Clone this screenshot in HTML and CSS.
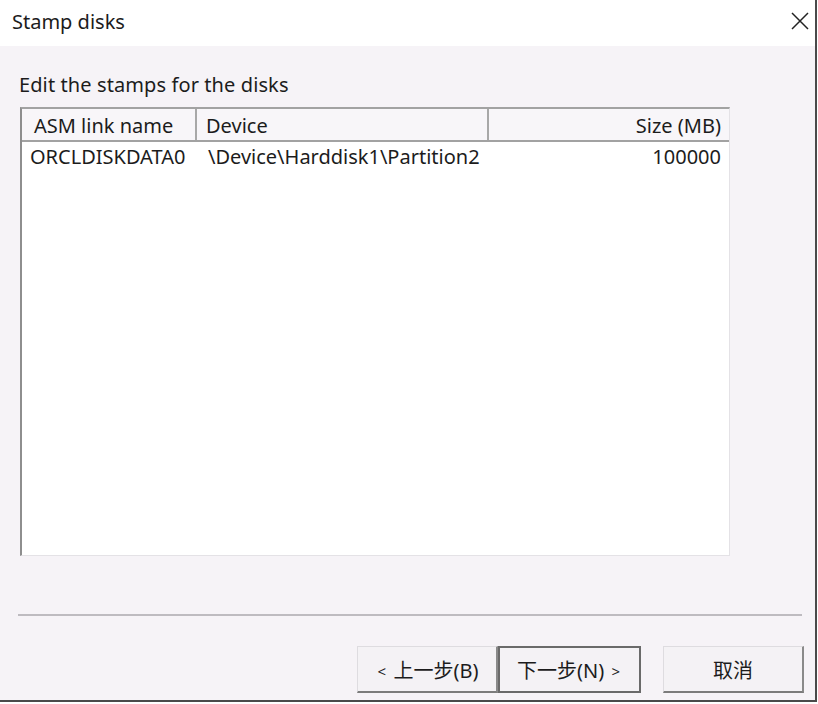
FILE: index.html
```html
<!DOCTYPE html>
<html lang="en">
<head>
<meta charset="utf-8">
<title>Stamp disks</title>
<link rel="stylesheet" href="styles.css">
</head>
<body>
<div class="window">
  <div class="titlebar">
    <span class="title">Stamp disks</span>
    <svg class="close" width="18" height="18" viewBox="0 0 18 18" aria-hidden="true">
      <path d="M1 1 L17 17 M17 1 L1 17" stroke="#222" stroke-width="1.5" fill="none"/>
    </svg>
  </div>
  <div class="content">
    <div class="caption">Edit the stamps for the disks</div>
    <div class="list">
      <div class="list-head">
        <div class="hcell c1">ASM link name</div>
        <div class="hcell c2">Device</div>
        <div class="hcell c3">Size (MB)</div>
      </div>
      <div class="list-row">
        <div class="cell c1">ORCLDISKDATA0</div>
        <div class="cell c2">\Device\Harddisk1\Partition2</div>
        <div class="cell c3">100000</div>
      </div>
    </div>
    <div class="separator"></div>
    <div class="buttons">
      <button class="btn"><span class="arrow">&lt;</span> 上一步(B)</button>
      <button class="btn btn-default">下一步(N) <span class="arrow">&gt;</span></button>
      <button class="btn btn-cancel">取消</button>
    </div>
  </div>
</div>
</body>
</html>
```

FILE: styles.css
```css
html, body {
  margin: 0;
  padding: 0;
  background: #ffffff;
}

body {
  font-family: "Noto Sans", "Noto Sans CJK SC", sans-serif;
  color: #1c1c1c;
}

.window {
  width: 815px;
  height: 700px;
  border-right: 2px solid #4a4a4a;
  border-bottom: 2px solid #4a4a4a;
  display: flex;
  flex-direction: column;
  background: #f6f3f7;
}

.titlebar {
  height: 46px;
  background: #ffffff;
  display: flex;
  align-items: center;
  justify-content: space-between;
  padding: 0 6px 0 12px;
}

.title {
  font-size: 20px;
  margin-top: -4px;
}

.close {
  margin-top: -4px;
}

.content {
  flex: 1;
  display: flex;
  flex-direction: column;
  padding: 0 11px 0 18px;
}

.caption {
  font-size: 20px;
  line-height: 24px;
  margin-top: 27px;
  margin-left: 1px;
  letter-spacing: 0.1px;
}

.list {
  margin-top: 10px;
  margin-left: 2px;
  width: 707px;
  height: 446px;
  background: #ffffff;
  border-top: 2px solid #a2a2a2;
  border-left: 2px solid #8e8e8e;
  border-right: 1px solid #e4e2e6;
  border-bottom: 1px solid #e4e2e6;
  display: flex;
  flex-direction: column;
}

.list-head {
  display: grid;
  grid-template-columns: 175px 292px 239px;
  height: 31px;
  background: #f8f6f9;
  border-bottom: 2px solid #a2a2a2;
}

.hcell {
  font-size: 20px;
  line-height: 33px;
  height: 31px;
  white-space: nowrap;
  overflow: hidden;
}

.list-head .c1 {
  padding-left: 12px;
  border-right: 2px solid #a8a8a8;
}

.list-head .c2 {
  padding-left: 9px;
  border-right: 2px solid #a8a8a8;
}

.list-head .c3 {
  text-align: right;
  padding-right: 7px;
}

.list-row {
  display: grid;
  grid-template-columns: 175px 292px 239px;
  height: 30px;
}

.cell {
  font-size: 20px;
  line-height: 30px;
  white-space: nowrap;
}

.list-row .c1 {
  padding-left: 8px;
}

.list-row .c2 {
  padding-left: 11px;
}

.list-row .c3 {
  text-align: right;
  padding-right: 7px;
}

.separator {
  margin-top: 58px;
  height: 2px;
  width: 784px;
  background: #bebbc0;
}

.buttons {
  margin-top: 30px;
  display: flex;
  justify-content: flex-end;
}

.btn {
  font-family: "Noto Sans", "Noto Sans CJK SC", sans-serif;
  font-size: 20px;
  color: #1c1c1c;
  height: 47px;
  width: 141px;
  background: #f4f2f5;
  border-top: 1px solid #dedce0;
  border-left: 1px solid #dedce0;
  border-right: 2px solid #8a8a8a;
  border-bottom: 2px solid #7c7c7c;
  padding: 0;
}

.arrow {
  font-size: 15px;
  vertical-align: 1px;
  margin: 0 2px;
}

.btn-default {
  width: 143px;
  border: 2px solid #6a6a6a;
}

.btn-cancel {
  margin-left: 22px;
}
```
